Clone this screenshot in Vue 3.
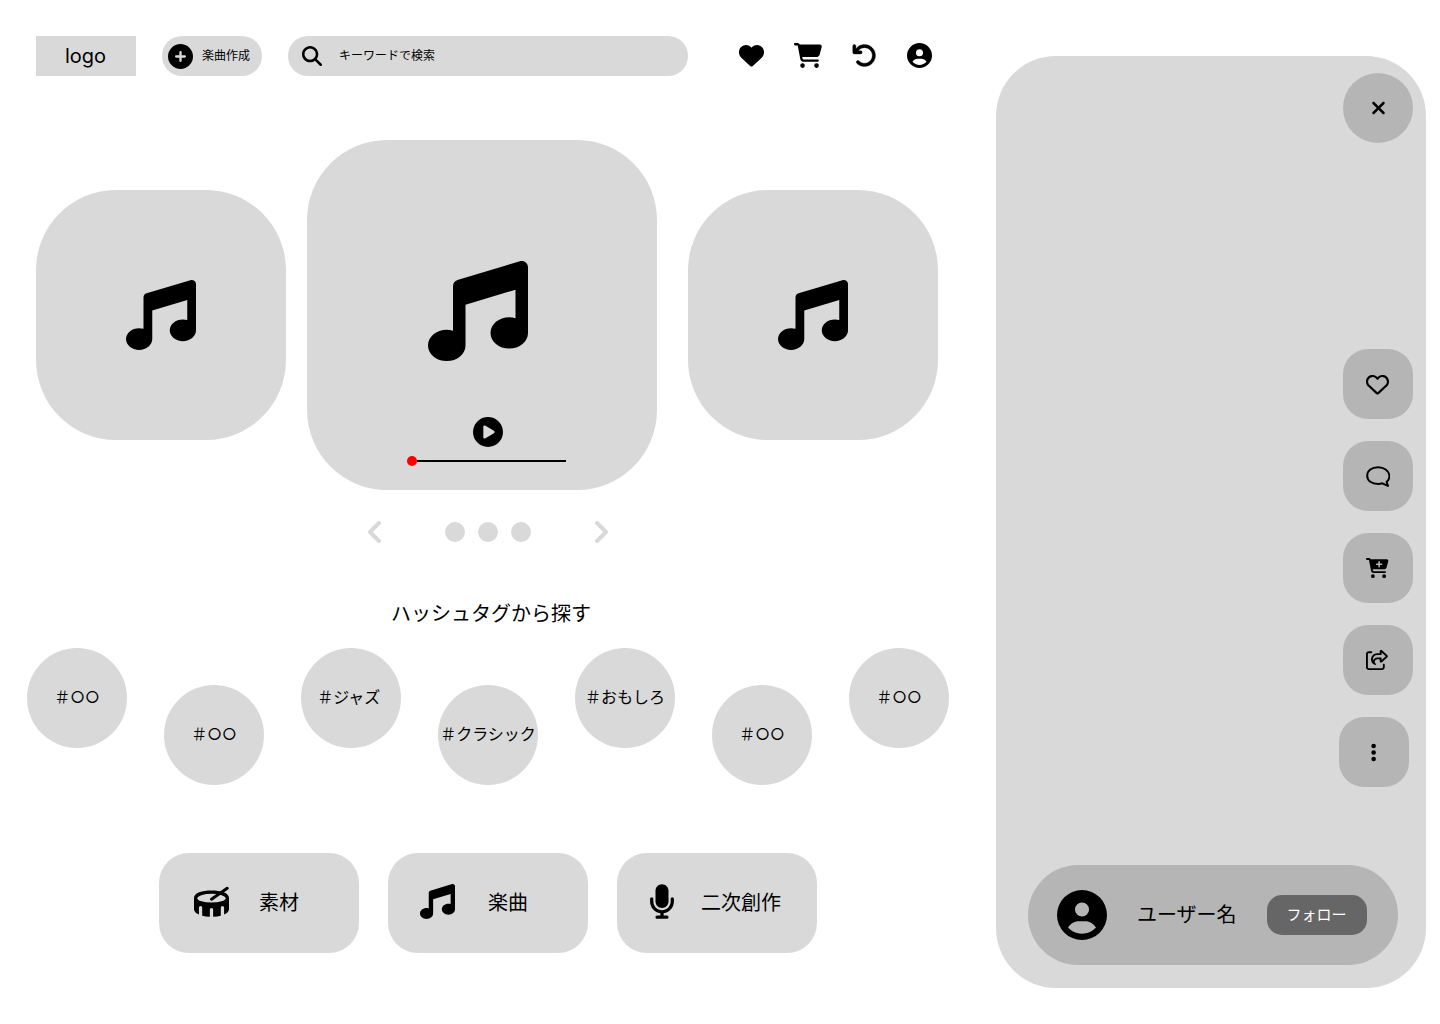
<template>
  <div class="page">
    <main class="main">
      <header class="header">
        <div class="logo">logo</div>
        <button class="add-btn">
          <svg class="add-icon" viewBox="0 0 512 512"><path :d="icons.circlePlus" /></svg>
          <span class="label">楽曲作成</span>
        </button>
        <div class="search">
          <svg class="search-icon" viewBox="0 0 512 512"><path :d="icons.search" /></svg>
          <span class="label">キーワードで検索</span>
        </div>
        <nav class="header-icons">
          <svg viewBox="0 0 512 512"><path :d="icons.heart" /></svg>
          <svg class="cart" viewBox="0 0 576 512"><path :d="icons.cart" /></svg>
          <svg class="undo" viewBox="0 0 512 512"><path :d="icons.undo" /></svg>
          <svg viewBox="0 0 512 512"><path :d="icons.user" /></svg>
        </nav>
      </header>

      <section class="carousel">
        <div class="card side">
          <svg class="note-md" viewBox="0 0 512 512"><path :d="icons.music" /></svg>
        </div>
        <div class="card center">
          <svg class="note-lg" viewBox="0 0 512 512"><path :d="icons.music" /></svg>
          <svg class="play" viewBox="0 0 512 512"><path :d="icons.play" /></svg>
          <div class="slider">
            <span class="slider-dot"></span>
            <span class="slider-line"></span>
          </div>
        </div>
        <div class="card side last">
          <svg class="note-md" viewBox="0 0 512 512"><path :d="icons.music" /></svg>
        </div>
      </section>

      <div class="pager">
        <svg class="chevron" viewBox="0 0 13 22"><path d="M11 2 2 11l9 9" /></svg>
        <div class="dots">
          <span v-for="n in 3" :key="n" class="dot"></span>
        </div>
        <svg class="chevron" viewBox="0 0 13 22"><path d="m2 2 9 9-9 9" /></svg>
      </div>

      <h2 class="tag-title">ハッシュタグから探す</h2>
      <div class="tags">
        <div v-for="(tag, i) in tags" :key="i" class="tag" :class="{ low: i % 2 === 1 }">{{ tag }}</div>
      </div>

      <div class="categories">
        <div class="category">
          <span class="cat-icon wide drum-slot">
            <svg class="drum" viewBox="0 0 512 512">
              <path fill-rule="evenodd" :d="icons.drum" />
              <path class="drum-stick" d="M256 222 486 62" />
            </svg>
          </span>
          <span class="label">素材</span>
        </div>
        <div class="category">
          <span class="cat-icon wide">
            <svg viewBox="0 0 512 512"><path :d="icons.music" /></svg>
          </span>
          <span class="label">楽曲</span>
        </div>
        <div class="category">
          <span class="cat-icon">
            <svg class="mic" viewBox="0 0 384 512"><path :d="icons.mic" /></svg>
          </span>
          <span class="label">二次創作</span>
        </div>
      </div>
    </main>

    <aside class="panel">
      <button class="close-btn">
        <svg viewBox="0 0 384 512"><path :d="icons.close" /></svg>
      </button>

      <div class="actions">
        <button class="action">
          <svg class="action-heart" viewBox="0 0 512 512"><path :d="icons.heartOutline" /></svg>
        </button>
        <button class="action">
          <svg class="bubble" viewBox="0 0 24 21">
            <path d="M12 1.2C5.8 1.2 1.2 4.7 1.2 9.7s4.6 8.3 10.8 8.3c1.5 0 3-.2 4.3-.7l5.7 2.6-1.4-3.8c1.8-1.6 2.9-3.7 2.9-6.4C22.5 4.7 18.2 1.2 12 1.2Z" />
          </svg>
        </button>
        <button class="action">
          <svg class="wide-icon" viewBox="0 0 576 512"><path :d="icons.cartPlus" /></svg>
        </button>
        <button class="action">
          <svg class="wide-icon" viewBox="0 0 576 512"><path :d="icons.share" /></svg>
        </button>
        <button class="action more">
          <svg class="dots-icon" viewBox="0 0 128 512"><path :d="icons.more" /></svg>
        </button>
      </div>

      <div class="user-bar">
        <svg class="avatar" viewBox="0 0 512 512"><path :d="icons.user" /></svg>
        <span class="user-name label">ユーザー名</span>
        <button class="follow">フォロー</button>
      </div>
    </aside>
  </div>
</template>

<script setup>
const tags = ['＃○○', '＃○○', '＃ジャズ ', '＃クラシック', '＃おもしろ', '＃○○', '＃○○']

const icons = {
  music: 'M499.1 6.3c8.1 6 12.9 15.6 12.9 25.7v72V368c0 44.2-43 80-96 80s-96-35.8-96-80s43-80 96-80c11.2 0 22 1.6 32 4.6V147L192 223.8V432c0 44.2-43 80-96 80s-96-35.8-96-80s43-80 96-80c11.2 0 22 1.6 32 4.6V200 128c0-14.1 9.3-26.6 22.8-30.7l320-96c9.7-2.9 20.2-1.1 28.3 5z',
  play: 'M0 256a256 256 0 1 1 512 0A256 256 0 1 1 0 256zM188.3 147.1c-7.6 4.2-12.3 12.3-12.3 20.9V344c0 8.7 4.7 16.7 12.3 20.9s16.8 4.1 24.3-.5l144-88c7.1-4.4 11.5-12.1 11.5-20.5s-4.4-16.1-11.5-20.5l-144-88c-7.4-4.5-16.7-4.7-24.3-.5z',
  heart: 'M47.6 300.4L228.3 469.1c7.5 7 17.4 10.9 27.7 10.9s20.2-3.9 27.7-10.9L464.4 300.4c30.4-28.3 47.6-68 47.6-109.5v-5.8c0-69.9-50.5-129.5-119.4-141C347 36.5 300.6 51.4 268 84L256 96 244 84c-32.6-32.6-79-47.5-124.6-39.9C50.5 55.6 0 115.2 0 185.1v5.8c0 41.5 17.2 81.2 47.6 109.5z',
  heartOutline: 'M225.8 468.2l-2.5-2.3L48.1 303.2C17.4 274.7 0 234.7 0 192.8v-3.3c0-70.4 50-130.8 119.2-144C158.6 37.9 198.9 47 231 69.6c9 6.4 17.4 13.8 25 22.3c4.2-4.8 8.7-9.2 13.5-13.3c3.7-3.2 7.5-6.2 11.5-9C313.1 47 353.4 37.9 392.8 45.4C462 58.6 512 119.1 512 189.5v3.3c0 41.9-17.4 81.9-48.1 110.4L288.7 465.9l-2.5 2.3c-8.2 7.6-19 11.9-30.2 11.9s-22-4.2-30.2-11.9zM239.1 145c-.4-.3-.7-.7-1-1.1l-17.8-20c-23.1-25.9-58-37.7-92-31.2C81.6 101.5 48 142.1 48 189.5v3.3c0 28.5 11.9 55.8 32.8 75.2L256 430.7 431.2 268c20.9-19.4 32.8-46.7 32.8-75.2v-3.3c0-47.3-33.6-88-80.1-96.9c-34-6.5-69 5.4-92 31.2l-17.8 20c-.3 .4-.7 .7-1 1.1c-4.5 4.5-10.6 7-16.9 7s-12.4-2.5-16.9-7z',
  cart: 'M0 24C0 10.7 10.7 0 24 0H69.5c22 0 41.5 12.8 50.6 32h411c26.3 0 45.5 25 38.6 50.4l-41 152.3c-8.5 31.4-37 53.3-69.5 53.3H170.7l5.4 28.5c2.2 11.3 12.1 19.5 23.6 19.5H488c13.3 0 24 10.7 24 24s-10.7 24-24 24H199.7c-34.6 0-64.3-24.6-70.7-58.5L77.4 54.5c-.7-3.8-4-6.5-7.9-6.5H24C10.7 48 0 37.3 0 24zM128 464a48 48 0 1 1 96 0 48 48 0 1 1 -96 0zm336-48a48 48 0 1 1 0 96 48 48 0 1 1 0-96z',
  cartPlus: 'M0 24C0 10.7 10.7 0 24 0H69.5c22 0 41.5 12.8 50.6 32H531.1c26.3 0 45.5 25 38.6 50.4l-41 152.3c-8.5 31.4-37 53.3-69.5 53.3H170.7l5.4 28.5c2.2 11.3 12.1 19.5 23.6 19.5H488c13.3 0 24 10.7 24 24s-10.7 24-24 24H199.7c-34.6 0-64.3-24.6-70.7-58.5L77.4 54.5c-.7-3.8-4-6.5-7.9-6.5H24C10.7 48 0 37.3 0 24zM128 464a48 48 0 1 1 96 0 48 48 0 1 1 -96 0zm336-48a48 48 0 1 1 0 96 48 48 0 1 1 0-96zM252 160c0 11 9 20 20 20h44v44c0 11 9 20 20 20s20-9 20-20V180h44c11 0 20-9 20-20s-9-20-20-20H356V96c0-11-9-20-20-20s-20 9-20 20v44H272c-11 0-20 9-20 20z',
  undo: 'M125.7 160H176c17.7 0 32 14.3 32 32s-14.3 32-32 32H48c-17.7 0-32-14.3-32-32V64c0-17.7 14.3-32 32-32s32 14.3 32 32v51.2L97.6 97.6c87.5-87.5 229.3-87.5 316.8 0s87.5 229.3 0 316.8s-229.3 87.5-316.8 0c-12.5-12.5-12.5-32.8 0-45.3s32.8-12.5 45.3 0c62.5 62.5 163.8 62.5 226.3 0s62.5-163.8 0-226.3s-163.8-62.5-226.3 0L125.7 160z',
  user: 'M399 384.2C376.9 345.8 335.4 320 288 320H224c-47.4 0-88.9 25.8-111 64.2c35.2 39.2 86.2 63.8 143 63.8s107.8-24.7 143-63.8zM0 256a256 256 0 1 1 512 0A256 256 0 1 1 0 256zm256 16a72 72 0 1 0 0-144 72 72 0 1 0 0 144z',
  circlePlus: 'M256 512A256 256 0 1 0 256 0a256 256 0 1 0 0 512zM232 344V280H168c-13.3 0-24-10.7-24-24s10.7-24 24-24h64V168c0-13.3 10.7-24 24-24s24 10.7 24 24v64h64c13.3 0 24 10.7 24 24s-10.7 24-24 24H280v64c0 13.3-10.7 24-24 24s-24-10.7-24-24z',
  search: 'M416 208c0 45.9-14.9 88.3-40 122.7L502.6 457.4c12.5 12.5 12.5 32.8 0 45.3s-32.8 12.5-45.3 0L330.7 376c-34.4 25.2-76.8 40-122.7 40C93.1 416 0 322.9 0 208S93.1 0 208 0S416 93.1 416 208zM208 352a144 144 0 1 0 0-288 144 144 0 1 0 0 288z',
  close: 'M342.6 150.6c12.5-12.5 12.5-32.8 0-45.3s-32.8-12.5-45.3 0L192 210.7 86.6 105.4c-12.5-12.5-32.8-12.5-45.3 0s-12.5 32.8 0 45.3L146.7 256 41.4 361.4c-12.5 12.5-12.5 32.8 0 45.3s32.8 12.5 45.3 0L192 301.3 297.4 406.6c12.5 12.5 32.8 12.5 45.3 0s12.5-32.8 0-45.3L237.3 256 342.6 150.6z',
  share: 'M400 255.4V240 208c0-8.8-7.2-16-16-16H352 336 289.5c-50.9 0-93.9 33.5-108.3 79.6c-3.3-9.4-5.2-19.8-5.2-31.6c0-61.9 50.1-112 112-112h48 16 32c8.8 0 16-7.2 16-16V80 64.6L506 160 400 255.4zM336 240h16v48c0 17.7 14.3 32 32 32h3.7c7.9 0 15.5-2.9 21.4-8.2l139-125.1c7.6-6.8 11.9-16.5 11.9-26.7s-4.3-19.9-11.9-26.7L409.9 8.9C403.5 3.2 395.3 0 386.7 0C367.5 0 352 15.5 352 34.7V80H336 304 288c-88.4 0-160 71.6-160 160c0 60.4 34.6 99.1 63.9 120.9c5.9 4.4 11.5 8.1 16.7 11.2c4.4 2.7 8.5 4.9 11.9 6.6c3.4 1.7 6.2 3 8.2 3.9c2.2 1 4.6 1.4 7.1 1.4h2.5c9.8 0 17.8-8 17.8-17.8c0-7.8-5.3-14.7-11.6-19.5c-.4-.3-.7-.5-1.1-.8c-1.7-1.1-3.4-2.5-5-4.1c-.8-.8-1.7-1.6-2.5-2.6s-1.6-1.9-2.4-2.9c-1.8-2.5-3.5-5.3-5-8.5c-2.6-6-4.3-13.3-4.3-22.4c0-36.1 29.3-65.5 65.5-65.5H304h32zM72 32C32.2 32 0 64.2 0 104V440c0 39.8 32.2 72 72 72H408c39.8 0 72-32.2 72-72V376c0-13.3-10.7-24-24-24s-24 10.7-24 24v64c0 13.3-10.7 24-24 24H72c-13.3 0-24-10.7-24-24V104c0-13.3 10.7-24 24-24h64c13.3 0 24-10.7 24-24s-10.7-24-24-24H72z',
  more: 'M64 360a56 56 0 1 0 0 112 56 56 0 1 0 0-112zm0-160a56 56 0 1 0 0 112 56 56 0 1 0 0-112zM120 96A56 56 0 1 0 8 96a56 56 0 1 0 112 0z',
  mic: 'M192 0C139 0 96 43 96 96V256c0 53 43 96 96 96s96-43 96-96V96c0-53-43-96-96-96zM64 216c0-13.3-10.7-24-24-24s-24 10.7-24 24v40c0 89.1 66.2 162.7 152 174.4V464H120c-13.3 0-24 10.7-24 24s10.7 24 24 24h72 72c13.3 0 24-10.7 24-24s-10.7-24-24-24H216V430.4c85.8-11.7 152-85.3 152-174.4V216c0-13.3-10.7-24-24-24s-24 10.7-24 24v40c0 70.7-57.3 128-128 128s-128-57.3-128-128V216z',
  drum: 'M256 96C114.6 96 0 128 0 208V368c0 31.3 27.4 58.8 72 78.7V344c0-13.3 10.7-24 24-24s24 10.7 24 24V463.4c33 8.9 71.1 14.5 112 16.1V376c0-13.3 10.7-24 24-24s24 10.7 24 24V479.5c40.9-1.6 79-7.2 112-16.1V344c0-13.3 10.7-24 24-24s24 10.7 24 24V446.7c44.6-19.9 72-47.4 72-78.7V208c0-80-114.6-112-256-112zM48 208a208 64 0 1 0 416 0 208 64 0 1 0 -416 0z'
}
</script>

<style>
html,
body {
  background: #fff;
}
</style>

<style scoped>
.page {
  display: flex;
  align-items: flex-start;
  width: 1440px;
  height: 1024px;
  overflow: hidden;
  font-family: "Noto Sans CJK JP", sans-serif;
  color: #000;
}

button {
  border: none;
  font-family: inherit;
  color: inherit;
  padding: 0;
}

svg {
  display: block;
  fill: #000;
  flex-shrink: 0;
}

/* cjk glyphs sit low in their line box */
.label {
  margin-bottom: 4px;
}

.main {
  width: 976px;
  flex-shrink: 0;
  padding-top: 36px;
}

/* header */
.header {
  display: flex;
  align-items: center;
  padding-left: 36px;
  height: 40px;
}

.logo {
  width: 100px;
  height: 40px;
  background: #d9d9d9;
  display: flex;
  align-items: center;
  justify-content: center;
  font-family: Inter, sans-serif;
  font-size: 20px;
  padding-right: 1px;
  box-sizing: border-box;
}

.add-btn {
  margin-left: 26px;
  width: 100px;
  height: 40px;
  border-radius: 20px;
  background: #d9d9d9;
  display: flex;
  align-items: center;
  padding-left: 6px;
  gap: 9px;
  font-size: 12px;
}

.add-icon {
  width: 25px;
  height: 25px;
}

.search {
  margin-left: 26px;
  width: 400px;
  height: 40px;
  border-radius: 20px;
  background: #d9d9d9;
  display: flex;
  align-items: center;
  padding-left: 14px;
  gap: 17px;
  font-size: 12px;
  box-sizing: border-box;
}

.search-icon {
  width: 20px;
  height: 20px;
}

.header-icons {
  margin: 0 0 2px 51px;
  display: flex;
  align-items: center;
  gap: 30px;
}

.header-icons svg {
  width: 25px;
  height: 25px;
}

.header-icons .cart {
  width: 28px;
}

.header-icons .undo {
  stroke: #000;
  stroke-width: 8;
}

/* carousel */
.carousel {
  margin-top: 64px;
  padding-left: 36px;
  display: flex;
  align-items: center;
}

.card {
  background: #d9d9d9;
  box-sizing: border-box;
  border-radius: 80px;
}

.side {
  width: 250px;
  height: 250px;
  display: flex;
  align-items: center;
  justify-content: center;
}

.side.last {
  margin-left: 31px;
}

.note-md {
  width: 70px;
  height: 70px;
}

.center {
  margin-left: 21px;
  width: 350px;
  height: 350px;
  padding: 121px 0 0 121px;
}

.note-lg {
  width: 100px;
  height: 100px;
}

.play {
  width: 30px;
  height: 30px;
  margin: 56px 0 0 45px;
}

.slider {
  margin: 9px 0 0 -21px;
  width: 159px;
  display: flex;
  align-items: center;
}

.slider-dot {
  width: 10px;
  height: 10px;
  border-radius: 50%;
  background: #ff0000;
}

.slider-line {
  flex: 1;
  height: 2px;
  background: #000;
}

/* pager */
.pager {
  margin-top: 31px;
  display: flex;
  align-items: center;
  justify-content: center;
  gap: 64px;
}

.chevron {
  width: 13px;
  height: 22px;
  fill: none;
  stroke: #d9d9d9;
  stroke-width: 4;
  stroke-linecap: round;
  stroke-linejoin: round;
}

.dots {
  display: flex;
  gap: 13px;
}

.dot {
  width: 20px;
  height: 20px;
  border-radius: 50%;
  background: #d9d9d9;
}

/* tags */
.tag-title {
  margin: 55px 0 0;
  text-align: center;
  font-size: 20px;
  line-height: 29px;
  font-weight: 400;
  padding-left: 6px;
}

.tags {
  margin-top: 21px;
  display: flex;
  justify-content: center;
  align-items: flex-start;
  gap: 37px;
}

.tag {
  width: 100px;
  height: 100px;
  border-radius: 50%;
  background: #d9d9d9;
  display: flex;
  align-items: center;
  justify-content: center;
  box-sizing: border-box;
  padding-bottom: 4px;
  font-family: Inter, "Noto Sans CJK JP", sans-serif;
  font-size: 16px;
  white-space: pre;
}

.tag.low {
  margin-top: 37px;
}

/* categories */
.categories {
  margin-top: 68px;
  display: flex;
  justify-content: center;
  gap: 29px;
}

.category {
  width: 200px;
  height: 100px;
  border-radius: 30px;
  background: #d9d9d9;
  display: flex;
  align-items: center;
  padding-left: 32px;
  box-sizing: border-box;
  font-size: 20px;
}

.cat-icon {
  width: 52px;
  display: flex;
  margin-bottom: 3px;
}

.cat-icon.wide {
  width: 68px;
}

.cat-icon svg {
  width: 35px;
  height: 35px;
}

.cat-icon .mic {
  width: 26px;
}

.drum-slot {
  padding-left: 3px;
  box-sizing: border-box;
}

.drum-stick {
  fill: none;
  stroke: #000;
  stroke-width: 44;
  stroke-linecap: round;
}

/* right panel */
.panel {
  margin: 56px 0 0 20px;
  width: 430px;
  height: 932px;
  border-radius: 60px;
  background: #d9d9d9;
  box-sizing: border-box;
  padding: 17px 13px 23px 32px;
  display: flex;
  flex-direction: column;
}

.close-btn {
  align-self: flex-end;
  width: 70px;
  height: 70px;
  border-radius: 50%;
  background: #b5b5b5;
  display: flex;
  align-items: center;
  justify-content: center;
}

.close-btn svg {
  width: 15px;
  height: 20px;
}

.actions {
  margin-top: 206px;
  display: flex;
  flex-direction: column;
  align-items: flex-end;
  gap: 22px;
}

.action {
  width: 70px;
  height: 70px;
  border-radius: 25px;
  background: #b5b5b5;
  display: flex;
  align-items: center;
  justify-content: center;
  padding-right: 1px;
}

.action-heart {
  width: 23px;
  height: 23px;
}

.wide-icon {
  width: 22.5px;
  height: 20px;
}

.dots-icon {
  width: 5.25px;
  height: 21px;
}

.action.more {
  margin-right: 4px;
}

.action .bubble {
  width: 24px;
  height: 21px;
  fill: none;
  stroke: #000;
  stroke-width: 2;
  stroke-linejoin: round;
}

.user-bar {
  margin-top: auto;
  width: 370px;
  height: 100px;
  border-radius: 50px;
  background: #b5b5b5;
  display: flex;
  align-items: center;
  padding-left: 29px;
  box-sizing: border-box;
}

.avatar {
  width: 50px;
  height: 50px;
}

.user-name {
  margin-left: 30px;
  font-size: 20px;
}

.follow {
  margin-left: 30px;
  width: 100px;
  height: 40px;
  border-radius: 15px;
  background: #666;
  color: #fff;
  font-size: 15px;
  padding-bottom: 4px;
}
</style>
